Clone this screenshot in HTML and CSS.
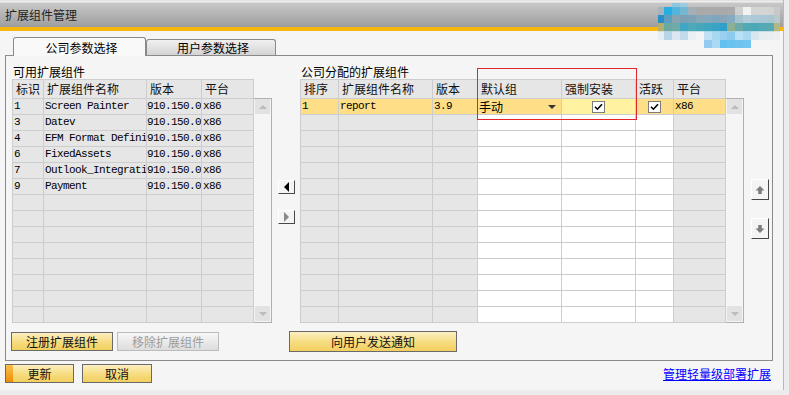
FILE: index.html
```html
<!DOCTYPE html>
<html lang="zh-CN">
<head>
<meta charset="utf-8">
<title>扩展组件管理</title>
<link rel="stylesheet" href="styles.css">
</head>
<body>
<div class="window">
  <div class="titlebar"><span class="title">扩展组件管理</span></div>
  <div class="accent"></div>
  <svg class="mosaic" width="122" height="45" viewBox="0 0 122 45">
    <g>
      <rect x="14" y="0" width="8" height="4" fill="#8fc6dd"/><rect x="22" y="0" width="8" height="4" fill="#9ccbe0"/>
    </g>
    <g>
      <rect x="0" y="4" width="6" height="8" fill="#a9b4ba"/><rect x="6" y="4" width="8" height="8" fill="#27aee2"/><rect x="14" y="4" width="8" height="8" fill="#52b5dc"/><rect x="22" y="4" width="8" height="8" fill="#75b7d1"/><rect x="30" y="4" width="8" height="8" fill="#a1b0b8"/><rect x="38" y="4" width="8" height="8" fill="#a9a9a9"/><rect x="46" y="4" width="8" height="8" fill="#aaaaaa"/><rect x="54" y="4" width="8" height="8" fill="#aaaaaa"/><rect x="62" y="4" width="7" height="8" fill="#a9a9a9"/><rect x="69" y="4" width="8" height="8" fill="#aaaaaa"/><rect x="77" y="4" width="8" height="8" fill="#d0d0d0"/><rect x="85" y="4" width="8" height="8" fill="#f2f2f2"/><rect x="93" y="4" width="8" height="8" fill="#d5d5d5"/><rect x="101" y="4" width="8" height="8" fill="#d5d5d5"/><rect x="109" y="4" width="7" height="8" fill="#d3d3d3"/><rect x="116" y="4" width="6" height="8" fill="#c9c9c9"/>
    </g>
    <g>
      <rect x="0" y="12" width="6" height="8" fill="#2a8fc8"/><rect x="6" y="12" width="8" height="8" fill="#5f9fbd"/><rect x="14" y="12" width="8" height="8" fill="#8aa3b1"/><rect x="22" y="12" width="8" height="8" fill="#7d9fb3"/><rect x="30" y="12" width="8" height="8" fill="#7da1b5"/><rect x="38" y="12" width="8" height="8" fill="#87a6b8"/><rect x="46" y="12" width="8" height="8" fill="#86a8bd"/><rect x="54" y="12" width="8" height="8" fill="#7ea6bf"/><rect x="62" y="12" width="7" height="8" fill="#89a5b7"/><rect x="69" y="12" width="8" height="8" fill="#86abc2"/><rect x="77" y="12" width="8" height="8" fill="#a7c2cf"/><rect x="85" y="12" width="8" height="8" fill="#b2ccd9"/><rect x="93" y="12" width="8" height="8" fill="#abc8d6"/><rect x="101" y="12" width="8" height="8" fill="#a9c7d4"/><rect x="109" y="12" width="7" height="8" fill="#aac6d3"/><rect x="116" y="12" width="6" height="8" fill="#b8c9cc"/>
    </g>
    <g>
      <rect x="0" y="20" width="6" height="8.5" fill="#b5ad6e"/><rect x="6" y="20" width="8" height="8.5" fill="#6ba9a3"/><rect x="14" y="20" width="8" height="8.5" fill="#6eaaa6"/><rect x="22" y="20" width="8" height="8.5" fill="#3fa6c6"/><rect x="30" y="20" width="8" height="8.5" fill="#4eaab9"/><rect x="38" y="20" width="8" height="8.5" fill="#47a7b9"/><rect x="46" y="20" width="8" height="8.5" fill="#40a5bf"/><rect x="54" y="20" width="8" height="8.5" fill="#3aa3c5"/><rect x="62" y="20" width="7" height="8.5" fill="#2f9fcc"/><rect x="69" y="20" width="8" height="8.5" fill="#8cb192"/><rect x="77" y="20" width="8" height="8.5" fill="#6aabaa"/><rect x="85" y="20" width="8" height="8.5" fill="#52a9b6"/><rect x="93" y="20" width="8" height="8.5" fill="#4ca8b6"/><rect x="101" y="20" width="8" height="8.5" fill="#54a9b5"/><rect x="109" y="20" width="7" height="8.5" fill="#57a9b2"/><rect x="116" y="20" width="6" height="8.5" fill="#b5b884"/>
    </g>
    <g>
      <rect x="0" y="28.5" width="6" height="8.5" fill="#e6eef4"/><rect x="6" y="28.5" width="8" height="8.5" fill="#b6d5e9"/><rect x="14" y="28.5" width="8" height="8.5" fill="#dbe8f1"/><rect x="22" y="28.5" width="8" height="8.5" fill="#c2dbec"/><rect x="30" y="28.5" width="8" height="8.5" fill="#e9f1f6"/><rect x="38" y="28.5" width="8" height="8.5" fill="#f2f4f6"/><rect x="46" y="28.5" width="8" height="8.5" fill="#bfe1f3"/><rect x="54" y="28.5" width="8" height="8.5" fill="#a6d8f1"/><rect x="62" y="28.5" width="7" height="8.5" fill="#99cff0"/><rect x="69" y="28.5" width="8" height="8.5" fill="#8dcbee"/><rect x="77" y="28.5" width="8" height="8.5" fill="#b6e1f6"/><rect x="85" y="28.5" width="8" height="8.5" fill="#a9d8f0"/><rect x="93" y="28.5" width="8" height="8.5" fill="#d8e7ef"/><rect x="101" y="28.5" width="8" height="8.5" fill="#e7eef2"/><rect x="109" y="28.5" width="7" height="8.5" fill="#eaeef1"/><rect x="116" y="28.5" width="6" height="8.5" fill="#eef0f0"/>
    </g>
    <g>
      <rect x="46" y="37" width="8" height="8" fill="#92cbef"/><rect x="54" y="37" width="8" height="8" fill="#a9d9f3"/><rect x="62" y="37" width="7" height="8" fill="#62c0ef"/><rect x="69" y="37" width="8" height="8" fill="#68c3ef"/><rect x="77" y="37" width="8" height="8" fill="#6dc5ef"/><rect x="85" y="37" width="8" height="8" fill="#70c6ef"/>
    </g>
  </svg>

  <div class="content">
    <div class="tabs">
      <div class="tab active">公司参数选择</div>
      <div class="tab">用户参数选择</div>
    </div>

    <div class="panel">
      <div class="panel-main">
        <div class="col-left">
          <div class="section-label">可用扩展组件</div>
          <div class="table-wrap">
            <div class="grid grid-left">
              <div class="h">标识</div><div class="h">扩展组件名称</div><div class="h">版本</div><div class="h">平台</div>
              <div class="d">1</div><div class="d">Screen Painter</div><div class="d v">910.150.0</div><div class="d">x86</div>
              <div class="d">3</div><div class="d">Datev</div><div class="d v">910.150.0</div><div class="d">x86</div>
              <div class="d">4</div><div class="d">EFM Format Defini</div><div class="d v">910.150.0</div><div class="d">x86</div>
              <div class="d">6</div><div class="d">FixedAssets</div><div class="d v">910.150.0</div><div class="d">x86</div>
              <div class="d">7</div><div class="d">Outlook_Integrati</div><div class="d v">910.150.0</div><div class="d">x86</div>
              <div class="d">9</div><div class="d">Payment</div><div class="d v">910.150.0</div><div class="d">x86</div>
              <div></div><div></div><div></div><div></div>
              <div></div><div></div><div></div><div></div>
              <div></div><div></div><div></div><div></div>
              <div></div><div></div><div></div><div></div>
              <div></div><div></div><div></div><div></div>
              <div></div><div></div><div></div><div></div>
              <div></div><div></div><div></div><div></div>
              <div></div><div></div><div></div><div></div>
            </div>
            <div class="vscroll"><span class="sbtn up"></span><span class="sbtn down"></span></div>
          </div>
        </div>

        <div class="col-mid">
          <span class="abtn"><span class="tri-left"></span></span>
          <span class="abtn"><span class="tri-right"></span></span>
        </div>

        <div class="col-right">
          <div class="section-label">公司分配的扩展组件</div>
          <div class="table-wrap">
            <div class="grid grid-right">
              <div class="h">排序</div><div class="h">扩展组件名称</div><div class="h">版本</div><div class="h">默认组</div><div class="h">强制安装</div><div class="h">活跃</div><div class="h">平台</div>
              <div class="d y">1</div><div class="d y">report</div><div class="d y">3.9</div><div class="d y combo">手动<span class="caret"></span></div><div class="ly ctr"><span class="chk"><svg width="9" height="8" viewBox="0 0 9 8"><path d="M1 3.8 L3.4 6.2 L8 1.2" fill="none" stroke="#000" stroke-width="1.6"/></svg></span></div><div class="y ctr"><span class="chk"><svg width="9" height="8" viewBox="0 0 9 8"><path d="M1 3.8 L3.4 6.2 L8 1.2" fill="none" stroke="#000" stroke-width="1.6"/></svg></span></div><div class="d y">x86</div>
              <div class="g"></div><div class="g"></div><div class="g"></div><div class="w"></div><div class="w"></div><div class="w"></div><div class="g"></div>
              <div class="g"></div><div class="g"></div><div class="g"></div><div class="w"></div><div class="w"></div><div class="w"></div><div class="g"></div>
              <div class="g"></div><div class="g"></div><div class="g"></div><div class="w"></div><div class="w"></div><div class="w"></div><div class="g"></div>
              <div class="g"></div><div class="g"></div><div class="g"></div><div class="w"></div><div class="w"></div><div class="w"></div><div class="g"></div>
              <div class="g"></div><div class="g"></div><div class="g"></div><div class="w"></div><div class="w"></div><div class="w"></div><div class="g"></div>
              <div class="g"></div><div class="g"></div><div class="g"></div><div class="w"></div><div class="w"></div><div class="w"></div><div class="g"></div>
              <div class="g"></div><div class="g"></div><div class="g"></div><div class="w"></div><div class="w"></div><div class="w"></div><div class="g"></div>
              <div class="g"></div><div class="g"></div><div class="g"></div><div class="w"></div><div class="w"></div><div class="w"></div><div class="g"></div>
              <div class="g"></div><div class="g"></div><div class="g"></div><div class="w"></div><div class="w"></div><div class="w"></div><div class="g"></div>
              <div class="g"></div><div class="g"></div><div class="g"></div><div class="w"></div><div class="w"></div><div class="w"></div><div class="g"></div>
              <div class="g"></div><div class="g"></div><div class="g"></div><div class="w"></div><div class="w"></div><div class="w"></div><div class="g"></div>
              <div class="g"></div><div class="g"></div><div class="g"></div><div class="w"></div><div class="w"></div><div class="w"></div><div class="g"></div>
              <div class="g"></div><div class="g"></div><div class="g"></div><div class="w"></div><div class="w"></div><div class="w"></div><div class="g"></div>
            </div>
            <div class="vscroll"><span class="sbtn up"></span><span class="sbtn down"></span></div>
          </div>
          <div class="highlight"></div>
        </div>

        <div class="col-side">
          <span class="mbtn"><svg width="10" height="10" viewBox="0 0 10 10"><path d="M5 1 L9.5 5.5 L6.8 5.5 L6.8 9 L3.2 9 L3.2 5.5 L0.5 5.5 Z" fill="#7d7d7d"/></svg></span>
          <span class="mbtn"><svg width="10" height="10" viewBox="0 0 10 10"><path d="M5 9 L9.5 4.5 L6.8 4.5 L6.8 1 L3.2 1 L3.2 4.5 L0.5 4.5 Z" fill="#7d7d7d"/></svg></span>
        </div>
      </div>

      <div class="panel-actions">
        <span class="btn">注册扩展组件</span>
        <span class="btn disabled">移除扩展组件</span>
        <span class="btn send">向用户发送通知</span>
      </div>
    </div>

    <div class="footer">
      <span class="btn ok">更新</span>
      <span class="btn cancel">取消</span>
      <a class="link" href="#">管理轻量级部署扩展</a>
    </div>
  </div>
</div>
</body>
</html>
```

FILE: styles.css
```css
* { box-sizing: border-box; margin: 0; padding: 0; }
html, body { width: 789px; height: 395px; overflow: hidden; }
body {
  background: #ececec;
  font-family: "Noto Sans CJK SC", sans-serif;
  font-size: 12px;
  color: #000;
}
.window {
  position: relative;
  width: 784px;
  height: 390px;
  background: #f5f5f5;
  border-right: 1px solid #b8b8b8;
}
.titlebar {
  height: 27px;
  padding-left: 5px;
  display: flex;
  align-items: center;
  background: linear-gradient(#dcdcdc 0, #f2f2f2 2px, #c8c8c8 3px, #9e9e9e 100%);
}
.title { font-size: 12px; line-height: 14px; color: #222; padding-top: 3px; }
.accent { height: 4px; background: #f6b80e; }
.mosaic { position: absolute; left: 658px; top: 3px; }

.content { padding: 6px 0 0 5px; }

.tabs { display: flex; align-items: flex-end; height: 18px; padding-left: 8px; }
.tab {
  width: 130px;
  height: 16px;
  border: 1px solid #8a8a8a;
  border-bottom: none;
  border-radius: 3px 3px 0 0;
  background: linear-gradient(#f0f0f0, #d4d4d4);
  text-align: center;
  line-height: 15px;
  font-size: 12px;
  padding-left: 4px;
}
.tab.active {
  width: 133px;
  height: 19px;
  margin-bottom: -1px;
  padding-top: 1px;
  line-height: 17px;
  background: #f9f9f9;
  position: relative;
  z-index: 1;
}

.panel {
  width: 768px;
  height: 306px;
  border: 1px solid #8a8a8a;
  background: #f5f5f5;
  display: flex;
  flex-direction: column;
}
.panel-main { display: flex; height: 267px; padding-left: 6px; }
.col-left { width: 260px; }
.col-right { width: 444px; position: relative; }
.section-label { height: 23px; padding: 8px 0 0 1px; line-height: 15px; white-space: nowrap; }
.table-wrap { display: flex; align-items: flex-start; }

.grid {
  display: grid;
  grid-template-rows: 18px;
  grid-auto-rows: 15px;
  gap: 1px;
  background: #cdcdcd;
  border: 1px solid #cdcdcd;
}
.grid > div { background: #e6e6e6; overflow: hidden; white-space: nowrap; }
.grid-left { width: 242px; grid-template-columns: 30px 102px 54px 51px; }
.grid-right { width: 426px; grid-template-columns: 37px 93px 44px 83px 73px 37px 51px; }
.grid .h { line-height: 18px; padding-left: 3px; color: #111; }
.grid .d {
  line-height: 15px;
  padding-left: 1px;
  font-family: "Liberation Mono", "Noto Sans CJK SC", monospace;
  font-size: 11px;
  letter-spacing: -0.6px;
}
.grid .v { padding-left: 0; }
.grid .combo { font-family: "Noto Sans CJK SC", sans-serif; font-size: 12px; letter-spacing: 0; display: flex; justify-content: space-between; align-items: center; padding-right: 5px; }
.grid > .y { background: #fedf88; }
.grid > .ly { background: #fff3a2; }
.grid > .w { background: #ffffff; }
.grid > .g { background: #e6e6e6; }
.ctr { display: flex; align-items: center; justify-content: center; }
.caret { width: 0; height: 0; border-left: 4px solid transparent; border-right: 4px solid transparent; border-top: 4px solid #333; }
.chk {
  width: 13px;
  height: 12px;
  border: 1px solid #7c7c7c;
  background: #fff;
  display: flex;
  align-items: center;
  justify-content: center;
}

.vscroll {
  width: 18px;
  height: 225px;
  margin-top: 19px;
  border: 1px solid #b0b0b0;
  border-left: none;
  padding: 0 1px 1px 1px;
  display: flex;
  flex-direction: column;
  justify-content: space-between;
}
.sbtn { width: 15px; height: 15px; background: #e2e2e2; display: flex; align-items: center; justify-content: center; }
.sbtn::after { content: ""; width: 0; height: 0; border-left: 4px solid transparent; border-right: 4px solid transparent; }
.sbtn.up::after { border-bottom: 4px solid #bcbcbc; }
.sbtn.down::after { border-top: 4px solid #bcbcbc; }

.col-mid { width: 28px; padding: 124px 0 0 6px; display: flex; flex-direction: column; gap: 16px; }
.abtn {
  width: 17px;
  height: 14px;
  background: #f4f4f4;
  border: 1px solid;
  border-color: #ffffff #474747 #474747 #ffffff;
  display: flex;
  align-items: center;
  justify-content: center;
}
.tri-left { width: 0; height: 0; border-top: 5px solid transparent; border-bottom: 5px solid transparent; border-right: 5px solid #000; }
.tri-right { width: 0; height: 0; border-top: 5px solid transparent; border-bottom: 5px solid transparent; border-left: 5px solid #8a8a8a; }

.col-side { width: 28px; padding: 123px 0 0 7px; display: flex; flex-direction: column; gap: 18px; }
.mbtn {
  width: 18px;
  height: 21px;
  background: #f4f4f4;
  border: 1px solid;
  border-color: #ffffff #474747 #474747 #ffffff;
  display: flex;
  align-items: center;
  justify-content: center;
}

.highlight {
  position: absolute;
  left: 177px;
  top: 12px;
  width: 160px;
  height: 52px;
  border: 1px solid #e3262c;
}

.panel-actions { display: flex; align-items: center; height: 21px; margin-top: 8px; padding-left: 5px; }
.btn {
  display: block;
  width: 102px;
  height: 19px;
  border: 1px solid #6a6a6a;
  background: linear-gradient(#fcefc2, #f7dd84 50%, #f3cf5e);
  text-align: center;
  line-height: 17px;
  font-size: 12px;
  color: #111;
  white-space: nowrap;
}
.btn.disabled { margin-left: 4px; border-color: #bcbcbc; background: linear-gradient(#f7f7f7, #dddddd); color: #9c9c9c; }
.btn.send { width: 168px; height: 21px; line-height: 19px; margin-left: 70px; }

.footer { display: flex; align-items: center; width: 768px; height: 19px; margin-top: 3px; }
.btn.ok {
  width: 69px;
  background: linear-gradient(#f9c04a, #ee8c08) left top / 7px 100% no-repeat, linear-gradient(#fcefc2, #f7dd84 50%, #f3cf5e);
}
.btn.cancel { width: 70px; margin-left: 8px; }
.link { margin-left: auto; margin-right: 2px; color: #0000ff; text-decoration: underline; font-size: 12px; line-height: 15px; }
```
